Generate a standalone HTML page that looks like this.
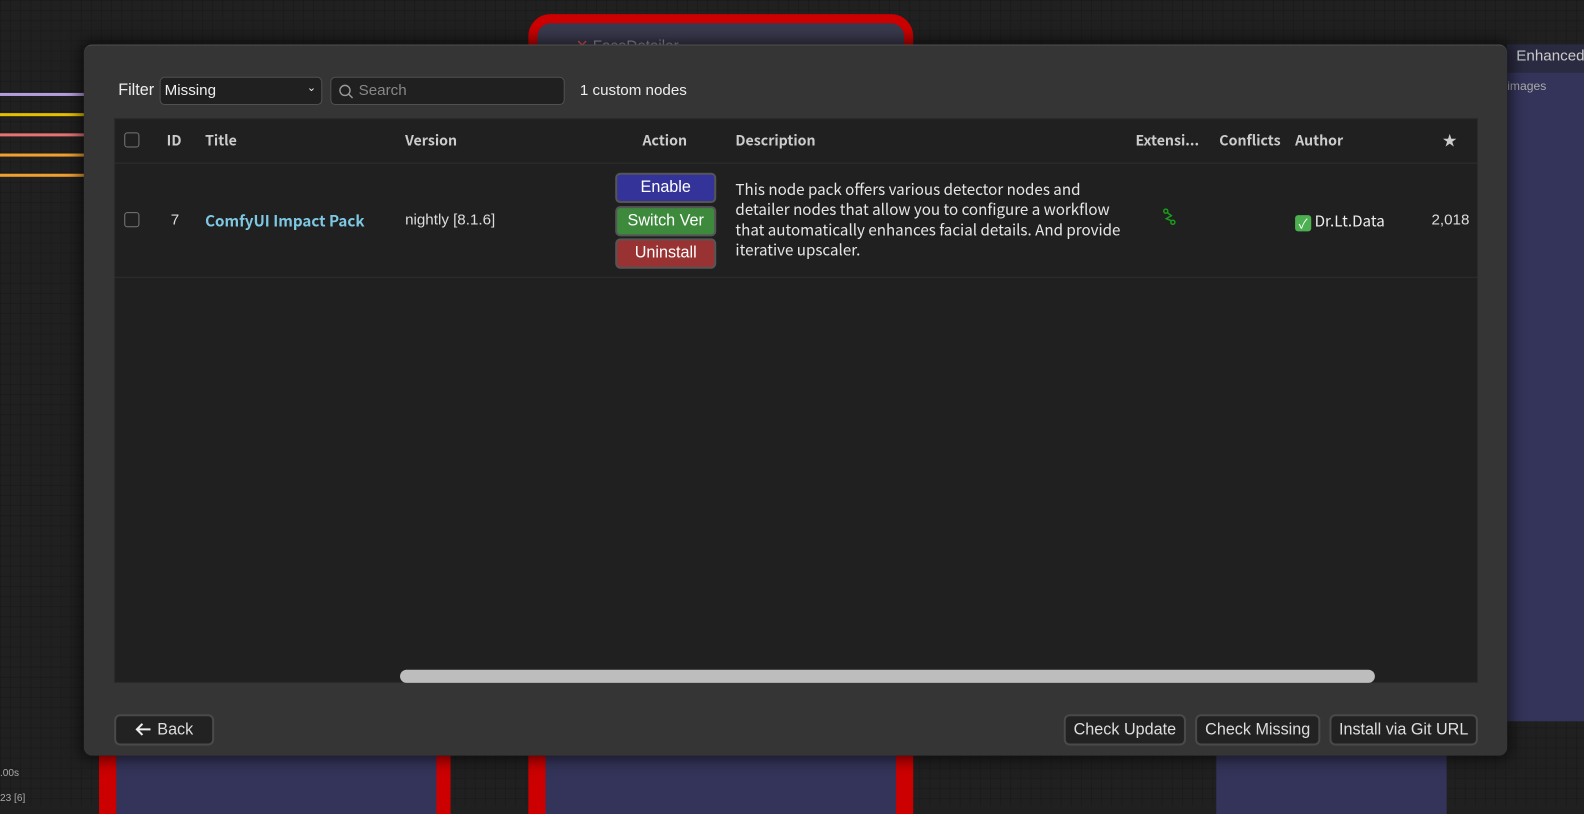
<!DOCTYPE html>
<html><head><meta charset="utf-8"><style>
*{box-sizing:border-box;margin:0;padding:0}
body{width:1584px;height:806px;overflow:hidden;background:#202020;position:relative;font-family:"Liberation Sans",sans-serif;color:#ddd}
#w{position:absolute;left:0;top:0;width:1568px;height:798px;transform:scale(1.0102);transform-origin:0 0;
background-image:linear-gradient(90deg,rgba(0,0,0,.12) 1px,transparent 1px),linear-gradient(rgba(0,0,0,.12) 1px,transparent 1px);background-size:10px 10px}
.a{position:absolute}
.line{position:absolute;left:0;width:84px;height:3px}
.nk{font-family:"Noto Sans CJK JP","DejaVu Sans",sans-serif}
.btn{position:absolute;border-radius:5px;border:2px solid #555;color:#fff;font-size:16px;text-align:center}
.fb{position:absolute;top:707px;height:31px;border:2px solid #4a4a4a;border-radius:6px;background:#222;color:#ddd;font-size:16px;line-height:27px;text-align:center}
</style></head><body><div id="w">
<div class="line" style="top:92px;background:#b39ddb"></div>
<div class="line" style="top:112px;background:#e6c000"></div>
<div class="line" style="top:132px;background:#e57373"></div>
<div class="line" style="top:152px;background:#f0a030"></div>
<div class="line" style="top:172px;background:#f0a030"></div>
<div class="a" style="left:523px;top:14px;width:381px;height:60px;border:9px solid #c00;border-radius:22px;background:#3a3a4e"></div>
<div class="a" style="left:570px;top:36px;color:#e55;font-size:15px">✕ <span style="color:#999">FaceDetailer</span></div>
<div class="a" style="left:1492px;top:44px;width:92px;height:670px;background:#34345a"></div>
<div class="a" style="left:1492px;top:44px;width:92px;height:28px;background:#2a2a40;color:#ccc;font-size:15px;padding:3px 0 0 9px">Enhanced</div>
<div class="a" style="left:1492px;top:78px;color:#aaa;font-size:12px">images</div>
<div class="a" style="left:98px;top:748px;width:348px;height:58px;background:#c00"></div>
<div class="a" style="left:115px;top:748px;width:317px;height:58px;background:#34345a"></div>
<div class="a" style="left:523px;top:748px;width:381px;height:58px;background:#c00"></div>
<div class="a" style="left:540px;top:748px;width:347px;height:58px;background:#34345a"></div>
<div class="a" style="left:1204px;top:748px;width:228px;height:58px;background:#34345a"></div>
<div class="a" style="left:0;top:760px;font-size:10px;color:#aaa">.00s</div>
<div class="a" style="left:0;top:785px;font-size:10px;color:#aaa">23 [6]</div>

<div class="a" style="left:83px;top:44px;width:1409px;height:704px;background:#353535;border-radius:8px;box-shadow:0 0 14px 4px rgba(0,0,0,.55);border-top:1px solid #505050"></div>
<div class="a" style="left:117px;top:81px;font-size:16px;color:#eee">Filter</div>
<div class="a" style="left:158px;top:76px;width:161px;height:28px;background:#202020;border:1px solid #505050;border-radius:5px;font-size:15px;padding:4px 4px;color:#eee">Missing<span style="position:absolute;right:5px;top:3px;font-size:11px">⌄</span></div>
<div class="a" style="left:327px;top:76px;width:232px;height:28px;background:#202020;border:1px solid #505050;border-radius:5px;font-size:15px;padding:4px 0 0 27px;color:#888">Search
<svg class="a" style="left:7px;top:6px" width="15" height="15" viewBox="0 0 15 15"><circle cx="6.5" cy="6.5" r="5" fill="none" stroke="#999" stroke-width="1.4"/><path d="M10 10l4 4" stroke="#999" stroke-width="1.4"/></svg></div>
<div class="a" style="left:574px;top:81px;font-size:15px;color:#eee">1 custom nodes</div>

<div class="a" style="left:113px;top:117px;width:1350px;height:559px;background:#202020;border:1px solid #2c2c2c"></div>
<div class="a" style="left:113px;top:161px;width:1350px;height:1px;background:#2e2e2e"></div>
<div class="a" style="left:113px;top:274px;width:1350px;height:1px;background:#2e2e2e"></div>
<div class="a" style="left:123px;top:131px;width:15px;height:15px;border:1px solid #777;border-radius:3px"></div>
<div class="a" style="left:123px;top:210px;width:15px;height:15px;border:1px solid #777;border-radius:3px"></div>
<div class="nk" style="font-weight:bold;font-size:14px;color:#ccc">
<div class="a" style="left:165px;top:129px">ID</div>
<div class="a" style="left:203px;top:129px">Title</div>
<div class="a" style="left:401px;top:129px">Version</div>
<div class="a" style="left:636px;top:129px">Action</div>
<div class="a" style="left:728px;top:129px">Description</div>
<div class="a" style="left:1124px;top:129px">Extensi...</div>
<div class="a" style="left:1207px;top:129px">Conflicts</div>
<div class="a" style="left:1282px;top:129px">Author</div>
<div class="a" style="left:1428px;top:129px">★</div>
</div>
<div class="a" style="left:169px;top:209px;font-size:15px">7</div>
<div class="a nk" style="left:203px;top:208px;font-size:15px;font-weight:bold;color:#7ec8e3">ComfyUI Impact Pack</div>
<div class="a" style="left:401px;top:209px;font-size:15px">nightly [8.1.6]</div>
<div class="btn" style="left:609px;top:171px;width:100px;height:30px;background:#333399;line-height:26px">Enable</div>
<div class="btn" style="left:609px;top:204px;width:100px;height:30px;background:#3d8a3d;line-height:26px">Switch Ver</div>
<div class="btn" style="left:609px;top:236px;width:100px;height:30px;background:#993333;line-height:26px">Uninstall</div>
<div class="a nk" style="left:728px;top:178px;width:390px;font-size:15px;line-height:20px;color:#e6e6e6">This node pack offers various detector nodes and detailer nodes that allow you to configure a workflow that automatically enhances facial details. And provide iterative upscaler.</div>
<svg class="a" style="left:1150px;top:206px" width="16" height="18" viewBox="0 0 16 18"><circle cx="4" cy="3" r="2" fill="none" stroke="#1a9a1a" stroke-width="1.5"/><circle cx="11" cy="14" r="2" fill="none" stroke="#1a9a1a" stroke-width="1.5"/><path d="M5.5 4.5l4 3-5 3 5 2" fill="none" stroke="#1a9a1a" stroke-width="1.5"/></svg>
<div class="a nk" style="left:1282px;top:208px;font-size:15px;color:#eee"><span style="display:inline-block;width:16px;height:16px;background:#4caf50;border-radius:3px;color:#fff;font-size:13px;line-height:16px;text-align:center;vertical-align:-2px">✓</span> Dr.Lt.Data</div>
<div class="a" style="left:1417px;top:209px;font-size:15px">2,018</div>
<div class="a" style="left:396px;top:663px;width:965px;height:13px;background:#bdbdbd;border-radius:7px"></div>

<div class="fb" style="left:113px;width:99px">
<svg style="vertical-align:-2px;margin-right:6px" width="16" height="14" viewBox="0 0 16 14"><path d="M15 7H2M7 1.5L1.5 7 7 12.5" fill="none" stroke="#eee" stroke-width="2"/></svg>Back</div>
<div class="fb" style="left:1053px;width:121px">Check Update</div>
<div class="fb" style="left:1183px;width:124px">Check Missing</div>
<div class="fb" style="left:1316px;width:147px">Install via Git URL</div>
</div></body></html>
